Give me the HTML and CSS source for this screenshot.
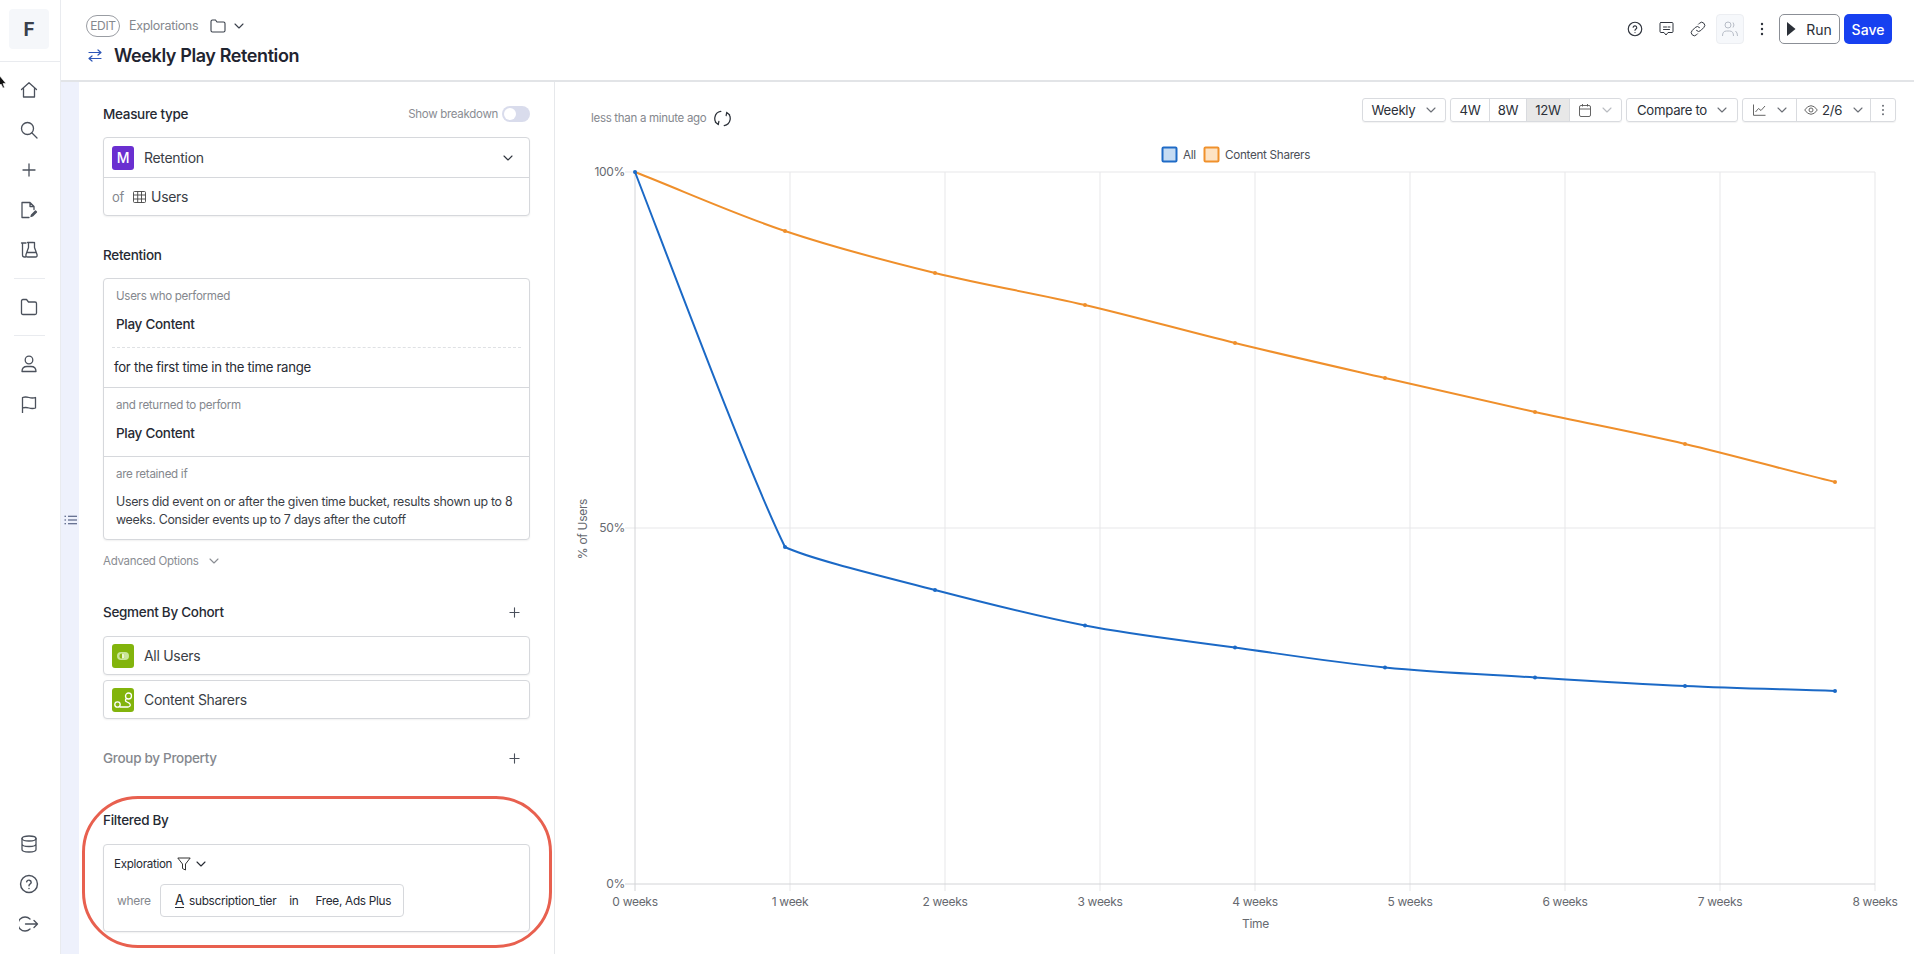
FILE: index.html
```html
<!DOCTYPE html>
<html lang="en">
<head>
  <meta charset="UTF-8">
  <title>Weekly Play Retention</title>
  <link rel="stylesheet" href="styles.css">
</head>
<body>

<svg class="defs" width="0" height="0">
  <symbol id="i-chev" viewBox="0 0 10 6"><path d="M1 1l4 4 4-4" fill="none" stroke="currentColor" stroke-width="1.1" stroke-linecap="round" stroke-linejoin="round"/></symbol>
  <symbol id="i-plus" viewBox="0 0 12 12"><path d="M6 1v10M1 6h10" fill="none" stroke="currentColor" stroke-width="1.2" stroke-linecap="round"/></symbol>
  <symbol id="i-help" viewBox="0 0 18 18"><g fill="none" stroke="currentColor" stroke-width="1.3" stroke-linecap="round"><circle cx="9" cy="9" r="7.6"/><path d="M6.9 7a2.1 2.1 0 0 1 4.1.5c0 1.4-2 1.7-2 3"/><path d="M9 13h.01"/></g></symbol>
  <symbol id="i-kebab" viewBox="0 0 4 14"><g fill="currentColor"><circle cx="2" cy="2" r="1.2"/><circle cx="2" cy="7" r="1.2"/><circle cx="2" cy="12" r="1.2"/></g></symbol>
</svg>

<aside class="sidebar">
  <div class="brand"><span>F</span></div>
  <svg class="cursor" width="7" height="14" viewBox="0 0 7 14"><path d="M-1 0l7 8.500H3l1.500 4-1.500.5-2-4-2 2z" fill="#111" stroke="#fff" stroke-width=".6"/></svg>
  <nav class="nav">
    <a class="nav-item"><svg width="18" height="18" viewBox="0 0 18 18"><path d="M1.5 8.5L9 1.8l7.5 6.7M3.5 7v9h11V7" /></svg></a>
    <a class="nav-item"><svg width="18" height="18" viewBox="0 0 18 18"><circle cx="7.5" cy="7.5" r="6"/><path d="M12 12l5 5"/></svg></a>
    <a class="nav-item"><svg width="16" height="16" viewBox="0 0 16 16"><path d="M8 2v12M2 8h12"/></svg></a>
    <a class="nav-item"><svg width="18" height="18" viewBox="0 0 18 18"><path d="M9 16.500H2V1.500h8l4 4v3M10 1.500v4h4"/><path d="M11.500 14l4-4 1 1-4 4-1.500.5z" fill="currentColor"/></svg></a>
    <a class="nav-item"><svg width="18" height="18" viewBox="0 0 18 18"><path d="M1.500 2h4.500M2.500 2v12q0 2 2 2h1M7.500 1.500h6M8.500 1.500v5l-2.500 7q-.5 2.500 1.500 2.500h8q2 0 1.500-2.500l-2.500-7v-5M7 11.500h9"/></svg></a>
    <hr class="nav-sep">
    <a class="nav-item"><svg width="18" height="18" viewBox="0 0 18 18"><path d="M1.500 3q0-1.500 1.500-1.500h3.500l2 2.500H15q1.500 0 1.500 1.500V15q0 1.500-1.500 1.500H3q-1.500 0-1.500-1.500z"/></svg></a>
    <hr class="nav-sep">
    <a class="nav-item"><svg width="18" height="18" viewBox="0 0 18 18"><circle cx="9" cy="5" r="3.800"/><path d="M2 16.500q0-5 5-5h4q5 0 5 5z"/></svg></a>
    <a class="nav-item"><svg width="18" height="18" viewBox="0 0 18 18"><path d="M2.500 18V2.500q3-1 6.500 0t6.500 0v10.500q-3 1-6.500 0t-6.500 0"/></svg></a>
  </nav>
  <nav class="nav nav-bottom">
    <a class="nav-item"><svg width="18" height="18" viewBox="0 0 18 18"><ellipse cx="9" cy="3.500" rx="7" ry="2.500"/><path d="M2 3.500v11q0 2.500 7 2.500t7-2.500v-11M2 9q0 2.500 7 2.500T16 9"/></svg></a>
    <a class="nav-item"><svg width="20" height="20" class="solid"><use href="#i-help"/></svg></a>
    <a class="nav-item"><svg width="20" height="18" viewBox="0 0 20 18"><path d="M11 4A7 7 0 1 0 11 14M6.500 9h12M15 5.500L18.500 9 15 12.500"/></svg></a>
  </nav>
</aside>

<div class="page">
  <header class="topbar">
    <div class="title-block">
      <div class="crumbs">
        <span class="edit-pill">EDIT</span>
        <span class="crumb">Explorations</span>
        <svg class="folder" width="16" height="14" viewBox="0 0 16 14"><path d="M1 2.500q0-1.500 1.500-1.500h3l1.500 2h6.500Q15 3 15 4.500v7q0 1.500-1.500 1.500h-11Q1 13 1 11.500z"/></svg>
        <svg class="chev" width="10" height="6"><use href="#i-chev"/></svg>
      </div>
      <div class="title-row">
        <svg width="14" height="13" viewBox="0 0 14 13"><path d="M1 3.500h12M10 1l3 2.500L10 6M13 9.500H1M4 7L1 9.500 4 12" fill="none" stroke="#2d56b8" stroke-width="1.200" stroke-linecap="round" stroke-linejoin="round"/></svg>
        <h1>Weekly Play Retention</h1>
      </div>
    </div>
    <div class="actions">
      <svg class="act" width="16" height="16"><use href="#i-help"/></svg>
      <svg class="act act-line" width="15" height="16" viewBox="0 0 15 16"><path d="M2 1.500h11q1 0 1 1v8q0 1-1 1H9l-2 2.500-2-2.500H2q-1 0-1-1v-8q0-1 1-1zM4.500 6h3M9 6h2M4.500 8.500h6"/></svg>
      <svg class="act act-line" width="16" height="16" viewBox="0 0 16 16"><path d="M6.500 9.500a3 3 0 0 0 4.300 0l3-3a3 3 0 0 0-4.300-4.300L8.500 3.200M9.500 6.500a3 3 0 0 0-4.300 0l-3 3a3 3 0 0 0 4.300 4.300l1-1"/></svg>
      <span class="share-box"><svg width="18" height="18" viewBox="0 0 18 18"><circle cx="7" cy="5" r="3"/><path d="M1.500 16q0-5 4-5h3q4 0 4 5M12 2.500q2 2.500 0 5M14.500 11q2 1.500 2 5"/></svg></span>
      <svg class="kebab" width="4" height="14"><use href="#i-kebab"/></svg>
      <button class="btn-run"><svg width="9" height="14" viewBox="0 0 9 14"><path d="M0 0l8.500 7L0 14z" fill="#2b3038"/></svg>Run</button>
      <button class="btn-save">Save</button>
    </div>
  </header>

  <div class="workspace">
    <div class="strip">
      <svg width="13" height="10" viewBox="0 0 13 10"><path d="M4 1.200h9M4 5h9M4 8.800h9M.5 1.200h1.500M.5 5h1.500M.5 8.800h1.500" fill="none" stroke="#3c4a70" stroke-width="1.100"/></svg>
    </div>

    <section class="panel">
      <div class="sec-head first">
        <h2>Measure type</h2>
        <div class="toggle-wrap">Show breakdown <span class="toggle"><span class="knob"></span></span></div>
      </div>
      <div class="card">
        <div class="row row-measure">
          <span class="badge badge-purple">M</span>
          <span class="row-text">Retention</span>
          <svg class="row-chev" width="10" height="6"><use href="#i-chev"/></svg>
        </div>
        <div class="row row-of">
          <span class="muted">of</span>
          <svg class="tbl" width="13" height="12" viewBox="0 0 13 12"><path d="M1.500.5h10q1 0 1 1v9q0 1-1 1h-10q-1 0-1-1v-9q0-1 1-1zM.5 4h12M.5 8h12M4.700.5v11M8.500.5v11" fill="none" stroke="#444" stroke-width=".9"/></svg>
          <span class="row-text">Users</span>
        </div>
      </div>

      <div class="sec-head"><h2>Retention</h2></div>
      <div class="card">
        <div class="block block-a">
          <div class="sub">Users who performed</div>
          <div class="event">Play Content</div>
          <div class="dash"></div>
          <div class="plain">for the first time in the time range</div>
        </div>
        <div class="block block-b">
          <div class="sub">and returned to perform</div>
          <div class="event">Play Content</div>
        </div>
        <div class="block block-c">
          <div class="sub">are retained if</div>
          <p class="note">Users did event on or after the given time bucket, results shown up to 8 weeks. Consider events up to 7 days after the cutoff</p>
        </div>
      </div>
      <div class="advanced">Advanced Options <svg width="10" height="6"><use href="#i-chev"/></svg></div>

      <div class="sec-head seg">
        <h2>Segment By Cohort</h2>
        <svg class="add" width="11" height="11"><use href="#i-plus"/></svg>
      </div>
      <div class="card row-card">
        <span class="badge badge-green"><svg width="12" height="8" viewBox="0 0 12 8"><rect width="12" height="8" rx="4" fill="#c9e59a"/><circle cx="5" cy="4" r="2.600" fill="#8db814"/><path d="M5 1.400a2.600 2.600 0 0 1 0 5.200z" fill="#eaf5d2"/></svg></span>
        <span class="row-text">All Users</span>
      </div>
      <div class="card row-card">
        <span class="badge badge-green"><svg width="22" height="22" viewBox="0 0 22 22"><path d="M14 10q-1.500 2 1 3t3 2q1 2.500-2 3H8" fill="none" stroke="#fff" stroke-width="1.300" stroke-linecap="round"/><circle cx="16.500" cy="7" r="3" fill="none" stroke="#fff" stroke-width="1.300"/><circle cx="5.500" cy="15.500" r="2.700" fill="none" stroke="#fff" stroke-width="1.300"/></svg></span>
        <span class="row-text">Content Sharers</span>
      </div>

      <div class="sec-head group">
        <h2>Group by Property</h2>
        <svg class="add" width="11" height="11"><use href="#i-plus"/></svg>
      </div>

      <div class="sec-head filtered"><h2>Filtered By</h2></div>
      <div class="card filter-card">
        <div class="filter-top">Exploration
          <svg width="14" height="14" viewBox="0 0 14 14"><path d="M.8 1h12.400L8.500 7v6L5.500 11.500V7z" fill="none" stroke="#333" stroke-width="1"/></svg>
          <svg width="10" height="6"><use href="#i-chev"/></svg>
        </div>
        <div class="filter-row">
          <span class="muted">where</span>
          <div class="filter-pill">
            <span class="attr">A</span>
            <span>subscription_tier</span>
            <span class="op">in</span>
            <span>Free, Ads Plus</span>
          </div>
        </div>
      </div>
      <div class="callout"></div>
    </section>

    <main class="chart-area">
      <div class="chart-top">
        <div class="updated">less than a minute ago
          <svg width="17" height="17" viewBox="0 0 15 15"><path d="M6 1.300A6.200 6.200 0 0 0 3.800 12.800M1.300 10.800l2.500 2 .5-2.700M9 13.700A6.200 6.200 0 0 0 11.200 2.200M13.700 4.200l-2.500-2-.5 2.700" fill="none" stroke="#2b3038" stroke-width="1.100" stroke-linecap="round" stroke-linejoin="round"/></svg>
        </div>
        <div class="toolbar">
          <div class="tool-group"><span class="tool w-weekly">Weekly <svg width="10" height="6"><use href="#i-chev"/></svg></span></div>
          <div class="tool-group">
            <span class="tool w-4w">4W</span>
            <span class="tool w-8w">8W</span>
            <span class="tool w-12w on">12W</span>
            <span class="tool w-cal">
              <svg class="tool-ic" width="12" height="13" viewBox="0 0 12 13"><path d="M2 1.500h8q1.500 0 1.500 1.500v8q0 1.500-1.500 1.500H2q-1.500 0-1.500-1.500V3q0-1.500 1.500-1.500zM.5 5h11M3.500 0v2.500M8.500 0v2.500" fill="none" stroke="#555" stroke-width=".9"/></svg>
              <svg class="pale" width="10" height="6"><use href="#i-chev"/></svg>
            </span>
          </div>
          <div class="tool-group"><span class="tool w-compare">Compare to <svg width="10" height="6"><use href="#i-chev"/></svg></span></div>
          <div class="tool-group">
            <span class="tool w-line">
              <svg class="tool-ic" width="13" height="12" viewBox="0 0 13 12"><path d="M.5.500v10.800h12M2.500 8l3-3.500 2.500 2L12 2" fill="none" stroke="#555" stroke-width=".9"/></svg>
              <svg width="10" height="6"><use href="#i-chev"/></svg>
            </span>
            <span class="tool w-eye">
              <svg class="tool-ic" width="14" height="10" viewBox="0 0 14 10"><path d="M.7 5Q3.500.700 7 .700T13.300 5Q10.500 9.300 7 9.300T.7 5z" fill="none" stroke="#555" stroke-width=".9"/><circle cx="7" cy="5" r="2" fill="none" stroke="#555" stroke-width=".9"/></svg>
              2/6
              <svg width="10" height="6"><use href="#i-chev"/></svg>
            </span>
            <span class="tool w-more"><svg class="kebab-sm" width="4" height="12" viewBox="0 0 4 14"><use href="#i-kebab"/></svg></span>
          </div>
        </div>
      </div>

      <svg class="chart" width="1359" height="824" viewBox="555 130 1359 824">
        <g class="legend">
          <rect x="1162.500" y="147.500" width="14" height="14" rx="1" fill="#c6dcf3" stroke="#1f6bc6" stroke-width="2"/>
          <text x="1183" y="159">All</text>
          <rect x="1204.500" y="147.500" width="14" height="14" rx="1" fill="#fde3c4" stroke="#f0912c" stroke-width="2"/>
          <text x="1225" y="159">Content Sharers</text>
        </g>
        <g class="grid">
          <path d="M790 172V891M945 172V891M1100 172V891M1255 172V891M1410 172V891M1565 172V891M1720 172V891M1875 172V891"/>
          <path d="M625 172H1875M625 528H1875"/>
        </g>
        <path class="axis" d="M635 172V891M625 884H1875"/>
        <g class="ticks">
          <text x="625" y="176" text-anchor="end">100%</text>
          <text x="625" y="532" text-anchor="end">50%</text>
          <text x="625" y="888" text-anchor="end">0%</text>
          <text x="635" y="906" text-anchor="middle">0 weeks</text>
          <text x="790" y="906" text-anchor="middle">1 week</text>
          <text x="945" y="906" text-anchor="middle">2 weeks</text>
          <text x="1100" y="906" text-anchor="middle">3 weeks</text>
          <text x="1255" y="906" text-anchor="middle">4 weeks</text>
          <text x="1410" y="906" text-anchor="middle">5 weeks</text>
          <text x="1565" y="906" text-anchor="middle">6 weeks</text>
          <text x="1720" y="906" text-anchor="middle">7 weeks</text>
          <text x="1875" y="906" text-anchor="middle">8 weeks</text>
          <text x="1255.500" y="928" text-anchor="middle">Time</text>
          <text transform="translate(587 529) rotate(-90)" text-anchor="middle">% of Users</text>
        </g>
        <path class="line orange" d="M635 172C685 191.700 735 214.200 785 231C835 247.800 885 260.700 935 273C985 285.300 1035 293.300 1085 305C1135 316.700 1185 330.800 1235 343C1285 355.200 1335 366.500 1385 378C1435 389.500 1485 401 1535 412C1585 423 1635 432.300 1685 444C1735 455.700 1785 470 1835 482"/>
        <path class="line blue" d="M635 172C685 302 750 475 785 547C810 559 885 577 935 590C985 603 1035 615.800 1085 625.500C1135 635.200 1185 640.500 1235 647.500C1285 654.500 1335 662.500 1385 667.500C1435 672.500 1485 674.400 1535 677.500C1585 680.600 1635 683.750 1685 686C1735 688.250 1785 689.300 1835 691"/>
        <g class="dots orange-dots">
          <circle cx="785" cy="231" r="2"/><circle cx="935" cy="273" r="2"/><circle cx="1085" cy="305" r="2"/><circle cx="1235" cy="343" r="2"/><circle cx="1385" cy="378" r="2"/><circle cx="1535" cy="412" r="2"/><circle cx="1685" cy="444" r="2"/><circle cx="1835" cy="482" r="2"/>
        </g>
        <g class="dots blue-dots">
          <circle cx="635" cy="172" r="2"/><circle cx="785" cy="547" r="2"/><circle cx="935" cy="590" r="2"/><circle cx="1085" cy="625.500" r="2"/><circle cx="1235" cy="647.500" r="2"/><circle cx="1385" cy="667.500" r="2"/><circle cx="1535" cy="677.500" r="2"/><circle cx="1685" cy="686" r="2"/><circle cx="1835" cy="691" r="2"/>
        </g>
      </svg>
    </main>
  </div>
</div>

</body>
</html>
```

FILE: styles.css
```css
* {
  box-sizing: border-box;
}

html, body {
  height: 100%;
}

body {
  margin: 0;
  display: flex;
  height: 954px;
  overflow: hidden;
  font-family: Inter, 'Noto Sans', sans-serif;
  font-size: 13px;
  letter-spacing: -0.3px;
  color: #262a33;
  background: #fff;
}

.defs {
  position: absolute;
}

/* left rail */
.sidebar {
  width: 61px;
  flex: none;
  display: flex;
  flex-direction: column;
  justify-content: space-between;
  border-right: 1px solid #e9ebef;
  position: relative;
}

.sidebar::before {
  content: "";
  position: absolute;
  left: 0;
  right: 0;
  top: 61px;
  border-top: 1px solid #e9ebef;
}

.brand {
  position: absolute;
  top: 9px;
  left: 9px;
  width: 40px;
  height: 40px;
  border-radius: 4px;
  background: #f5f7fa;
  display: flex;
  align-items: center;
  justify-content: center;
  font-size: 19px;
  font-weight: 700;
  color: #3a404b;
}

.cursor {
  position: absolute;
  left: 0;
  top: 75px;
}

.nav {
  padding-top: 70px;
}

.nav-bottom {
  padding: 0 0 10px;
}

.nav-item {
  height: 40px;
  display: flex;
  align-items: center;
  justify-content: center;
  padding-right: 2px;
  color: #4b515c;
}

.nav-item svg {
  fill: none;
  stroke: #4b515c;
  stroke-width: 1.3;
  stroke-linecap: round;
  stroke-linejoin: round;
}

.nav-item svg.solid {
  stroke: none;
}

.nav-sep {
  margin: 8px 14px;
  border: 0;
  border-top: 1px solid #e9ebef;
  width: 31px;
  height: 0;
}

/* header */
.page {
  flex: 1;
  min-width: 0;
  display: flex;
  flex-direction: column;
}

.topbar {
  height: 82px;
  flex: none;
  display: flex;
  justify-content: space-between;
  padding: 14px 22px 0 25px;
  border-bottom: 2px solid #e2e4e7;
}

.crumbs {
  display: flex;
  align-items: center;
  height: 23px;
  color: #85888e;
}

.edit-pill {
  border: 1px solid #9a9da3;
  border-radius: 11px;
  width: 34px;
  height: 22px;
  line-height: 20px;
  text-align: center;
  font-size: 12px;
  margin-right: 9px;
}

.crumb {
  font-size: 12.5px;
}

.folder {
  margin-left: 12px;
  fill: none;
  stroke: #3a404b;
  stroke-width: 1.1;
}

.chev {
  margin-left: 8px;
  color: #3a404b;
}

.title-row {
  display: flex;
  align-items: center;
  gap: 12px;
  margin-top: 8px;
  margin-left: 2px;
}

h1 {
  margin: 0;
  font-size: 18px;
  font-weight: 600;
  letter-spacing: -0.4px;
  color: #1f2430;
}

.actions {
  display: flex;
  align-items: center;
  height: 30px;
}

.act {
  margin-right: 16px;
  color: #2f343d;
}

.act-line {
  fill: none;
  stroke: #2f343d;
  stroke-width: 1;
  stroke-linecap: round;
}

.share-box {
  width: 28px;
  height: 30px;
  margin-left: -6px;
  border: 1px solid #eceef2;
  border-radius: 4px;
  background: #f6f8fb;
  display: flex;
  align-items: center;
  justify-content: center;
}

.share-box svg {
  fill: none;
  stroke: #b6bcc6;
  stroke-width: 1;
}

.kebab {
  margin: 0 15px 0 16px;
  color: #2f343d;
}

.btn-run, .btn-save {
  height: 30px;
  font: inherit;
  font-size: 14px;
  border-radius: 5px;
  padding: 0;
  display: flex;
  align-items: center;
  justify-content: center;
}

.btn-run {
  width: 61px;
  gap: 10px;
  background: #fff;
  border: 1px solid #8b8f96;
  color: #2b3038;
}

.btn-save {
  width: 48px;
  margin-left: 4px;
  background: #1740f0;
  border: 0;
  color: #fff;
  font-weight: 500;
}

/* body of the page */
.workspace {
  flex: 1;
  min-height: 0;
  display: flex;
}

.strip {
  width: 18px;
  flex: none;
  background: #eef1fc;
  display: flex;
  align-items: center;
  justify-content: center;
  padding-left: 1px;
  padding-top: 4px;
}

.panel {
  width: 476px;
  flex: none;
  padding: 0 24px;
  border-right: 1px solid #e6e8eb;
  position: relative;
}

.sec-head {
  height: 20px;
  margin-top: 29px;
  margin-bottom: 13px;
  display: flex;
  align-items: center;
  justify-content: space-between;
}

.sec-head.first {
  margin-top: 22px;
}

.sec-head.seg {
  margin-top: 31px;
  margin-bottom: 14px;
}

.sec-head.group {
  margin-top: 29px;
  margin-bottom: 0;
}

.sec-head.group h2 {
  color: #85888e;
}

.sec-head.filtered {
  margin-top: 42px;
  margin-bottom: 14px;
}

h2 {
  margin: 0;
  font-size: 13.5px;
  font-weight: 500;
  color: #262a33;
}

.add {
  margin-right: 10px;
  color: #4b515c;
}

.toggle-wrap {
  display: flex;
  align-items: center;
  gap: 4px;
  font-size: 11.5px;
  color: #8a8d93;
}

.toggle {
  width: 28px;
  height: 16px;
  border-radius: 8px;
  background: #d9dcec;
  padding: 2px;
}

.knob {
  display: block;
  width: 12px;
  height: 12px;
  border-radius: 50%;
  background: #fff;
}

.card {
  border: 1px solid #d6d8dc;
  border-radius: 4px;
  box-shadow: 0 1px 2px rgba(0, 0, 0, 0.06);
  background: #fff;
}

.row {
  display: flex;
  align-items: center;
  padding: 0 8px;
  height: 39px;
}

.row + .row {
  border-top: 1px solid #d6d8dc;
}

.row-of {
  height: 38px;
}

.badge {
  width: 22px;
  height: 24px;
  flex: none;
  border-radius: 3px;
  display: flex;
  align-items: center;
  justify-content: center;
  color: #fff;
  font-size: 14px;
  font-weight: 500;
}

.badge-purple {
  background: #6a2fd0;
}

.badge-green {
  background: #82b40c;
}

.row-text {
  font-size: 14px;
  margin-left: 10px;
  color: #3a3e46;
}

.row-chev {
  margin-left: auto;
  margin-right: 8px;
  color: #2f343d;
}

.muted {
  color: #85888e;
  font-size: 13px;
}

.tbl {
  margin-left: 9px;
}

.row-of .row-text {
  margin-left: 5px;
}

.block {
  padding: 8px 12px 0;
}

.block + .block {
  border-top: 1px solid #d6d8dc;
}

.block-a {
  height: 108px;
}

.block-b {
  height: 69px;
}

.block-c {
  height: 83px;
}

.sub {
  font-size: 11.6px;
  line-height: 18px;
  color: #85888e;
}

.event {
  font-size: 13.5px;
  font-weight: 500;
  line-height: 20px;
  margin-top: 9px;
}

.dash {
  margin: 13px -4px 9px -4px;
  border-top: 1px dashed #dfe1e4;
}

.plain {
  font-size: 13.2px;
  line-height: 20px;
  margin-left: -2px;
}

.note {
  margin: 10px 0 0;
  font-size: 12.4px;
  line-height: 18px;
  color: #3a3e46;
}

.advanced {
  height: 20px;
  margin-top: 11px;
  display: flex;
  align-items: center;
  gap: 10px;
  font-size: 11.5px;
  color: #8a8d93;
}

.row-card {
  height: 39px;
  display: flex;
  align-items: center;
  padding: 0 8px;
  margin-bottom: 5px;
}

.filter-card {
  height: 88px;
  padding: 9px 10px;
}

.filter-top {
  display: flex;
  align-items: center;
  gap: 5px;
  font-size: 11.6px;
  height: 20px;
}

.filter-row {
  display: flex;
  align-items: center;
  gap: 9px;
  margin-top: 10px;
  padding-left: 3px;
}

.filter-row .muted {
  font-size: 12px;
}

.filter-pill {
  display: flex;
  align-items: center;
  height: 33px;
  width: 244px;
  padding: 0 12px 0 14px;
  border: 1px solid #d6d8dc;
  border-radius: 4px;
  font-size: 11.8px;
  white-space: nowrap;
}

.attr {
  font-size: 14px;
  line-height: 14px;
  border-bottom: 1px solid #262a33;
  margin-right: 5px;
}

.op {
  margin: 0 17px 0 13px;
}

.callout {
  position: absolute;
  left: 3px;
  top: 714px;
  width: 470px;
  height: 152px;
  border: 3px solid #e8604f;
  border-radius: 56px;
  pointer-events: none;
}

/* chart side */
.chart-area {
  flex: 1;
  min-width: 0;
  overflow: hidden;
}

.chart-top {
  height: 48px;
  padding: 16px 18px 0 36px;
  display: flex;
  justify-content: space-between;
}

.updated {
  display: flex;
  align-items: center;
  gap: 8px;
  height: 20px;
  margin-top: 10px;
  font-size: 11.5px;
  color: #85888e;
}

.toolbar {
  display: flex;
  gap: 4px;
}

.tool-group {
  display: flex;
  height: 24px;
  border: 1px solid #d9dbdf;
  border-radius: 3px;
  box-shadow: 0 1px 1px rgba(0, 0, 0, 0.05);
}

.tool {
  display: flex;
  align-items: center;
  justify-content: center;
  gap: 7px;
  font-size: 13.2px;
  color: #2b3038;
}

.tool + .tool {
  border-left: 1px solid #d9dbdf;
}

.tool svg {
  color: #6b6f76;
}

.tool svg.pale {
  color: #b9bcc1;
}

.tool.on {
  background: #e8e8e8;
}

.w-weekly {
  width: 82px;
  gap: 11px;
}

.w-4w {
  width: 38px;
}

.w-8w {
  width: 37px;
}

.w-12w {
  width: 43px;
}

.w-cal {
  width: 52px;
  gap: 11px;
}

.w-compare {
  width: 110px;
  gap: 10px;
}

.w-line {
  width: 53px;
  gap: 11px;
}

.w-eye {
  width: 74px;
  gap: 4px;
}

.w-eye svg:last-child {
  margin-left: 7px;
}

.w-more {
  width: 25px;
}

.chart {
  display: block;
}

.legend text {
  font-size: 11.7px;
  fill: #4c5058;
}

.grid path {
  fill: none;
  stroke: #e7e7e9;
  stroke-width: 1;
}

.axis {
  fill: none;
  stroke: #d3d4d7;
  stroke-width: 1;
}

.ticks text {
  font-size: 12px;
  fill: #66696f;
}

.line {
  fill: none;
  stroke-width: 2;
}

.orange {
  stroke: #ef8f2b;
}

.blue {
  stroke: #1b69c6;
}

.orange-dots {
  fill: #ef8f2b;
}

.blue-dots {
  fill: #1b69c6;
}
```
